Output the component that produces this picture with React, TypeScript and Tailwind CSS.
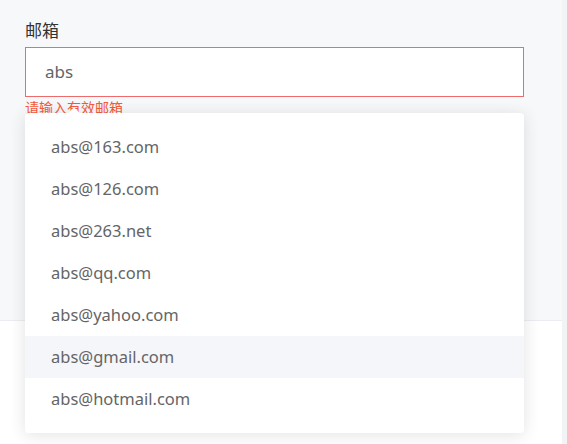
const SUGGESTIONS = [
  "abs@163.com",
  "abs@126.com",
  "abs@263.net",
  "abs@qq.com",
  "abs@yahoo.com",
  "abs@gmail.com",
  "abs@hotmail.com",
];

const FONT = "font-['Noto_Sans','Noto_Sans_CJK_SC',sans-serif]";

export default function App() {
  const active = "abs@gmail.com";

  return (
    <div className={`relative flex h-[444px] flex-col bg-[#f2f3f5] ${FONT}`}>
      {/* Form area */}
      <div className="mr-[5px] flex h-[320px] flex-col bg-[#f7f8fa] px-[25px] pt-[19px]">
        <label className="text-[17px] leading-[24px] text-[#323233]">邮箱</label>
        <div className="mt-[4px] flex h-[50px] w-[499px] items-center border border-[#ef6b6b] bg-white px-[19px]">
          <span className="text-[17px] text-[#646566]">abs</span>
        </div>
        <p className="mt-[2px] text-[14px] leading-[18px] text-[#f45a3c]">请输入有效邮箱</p>
      </div>

      {/* Lower area */}
      <div className="mr-[5px] flex-1 border-t border-[#ebedf0] bg-white" />

      {/* Suggestion dropdown */}
      <div className="absolute left-[25px] top-[113px] w-[499px] rounded-[4px] bg-white py-[13px] shadow-[0_2px_16px_rgba(50,50,51,0.14)]">
        <div className="absolute -top-[4px] left-[45px] h-[8px] w-[8px] rotate-45 bg-white" />
        <ul className="relative flex flex-col">
          {SUGGESTIONS.map((s) => (
            <li
              key={s}
              className={`flex h-[42px] items-center px-[26px] text-[16.5px] text-[#646566] ${
                s === active ? "bg-[#f5f6fa]" : ""
              }`}
            >
              {s}
            </li>
          ))}
        </ul>
      </div>
    </div>
  );
}
